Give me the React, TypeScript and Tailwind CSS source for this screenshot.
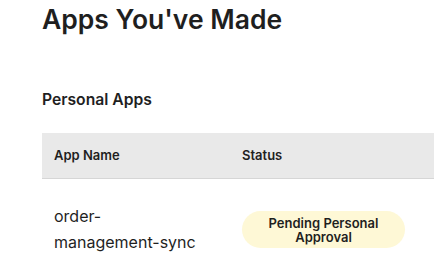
import React from 'react'

export default function App() {
  return (
    <div className="min-h-screen w-full overflow-hidden bg-white text-[#1f1f1f]" style={{ fontFamily: 'Inter, "Noto Sans", sans-serif' }}>
      <div className="pl-[42px]">
        <h1 className="pt-[2px] text-[26.5px] font-semibold leading-[34px]">Apps You've Made</h1>
        <h2 className="mt-[53px] text-[15.7px] font-semibold leading-[22px]">Personal Apps</h2>
        <table className="mt-[22px] w-[600px] border-collapse text-left">
          <thead>
            <tr className="h-[45px] border-b border-[#d6d6d6] bg-[#e9e9e9]">
              <th className="w-[200px] pl-[12px] text-[13px] font-semibold">App Name</th>
              <th className="text-[13px] font-semibold">Status</th>
            </tr>
          </thead>
          <tbody>
            <tr>
              <td className="pl-[12px] pt-[24px] align-top text-[16px] font-normal leading-[26px]">
                order-<br />management-sync
              </td>
              <td className="pt-[31px] align-top">
                <span className="inline-flex h-[37px] w-[163px] items-center justify-center rounded-full bg-[#fef8d6] text-center text-[13px] font-semibold leading-[14px]">
                  Pending Personal<br />Approval
                </span>
              </td>
            </tr>
          </tbody>
        </table>
      </div>
    </div>
  )
}
